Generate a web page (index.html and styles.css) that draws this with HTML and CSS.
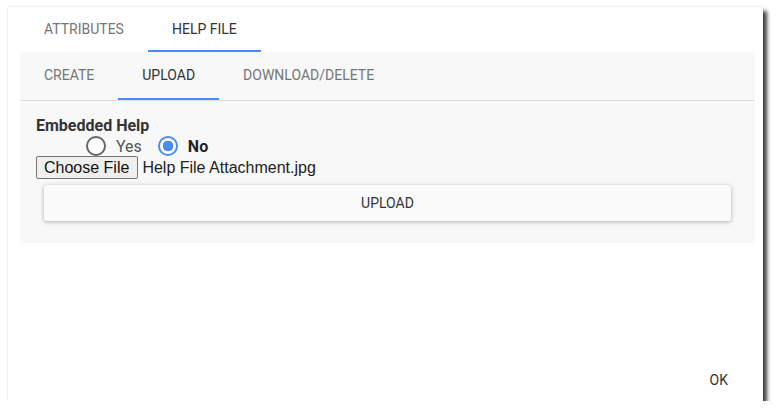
FILE: index.html
```html
<!DOCTYPE html>
<html lang="en">
<head>
    <meta charset="UTF-8">
    <meta name="viewport" content="width=device-width, initial-scale=1.0">
    <title>Help File</title>
    <link rel="stylesheet" href="styles.css">
</head>
<body>
    <div class="dialog">
        <div class="tabs">
            <div class="tab">Attributes</div>
            <div class="tab active">Help File</div>
        </div>

        <div class="panel">
            <div class="tabs sub-tabs">
                <div class="tab">Create</div>
                <div class="tab active">Upload</div>
                <div class="tab">Download/Delete</div>
            </div>

            <div class="upload-form">
                <div class="field-label">Embedded Help</div>
                <div class="radio-row">
                    <label class="radio"><span class="circle"></span>Yes</label>
                    <label class="radio checked"><span class="circle"></span>No</label>
                </div>
                <div class="file-row">
                    <span class="file-button">Choose File</span>
                    <span class="file-name">Help File Attachment.jpg</span>
                </div>
                <button class="upload-btn">Upload</button>
            </div>
        </div>

        <div class="actions">
            <button class="text-btn">OK</button>
        </div>
    </div>
</body>
</html>
```

FILE: styles.css
```css
body {
    margin: 0;
    font-family: Roboto, "Liberation Sans", Arial, sans-serif;
    background: #fff;
    color: #333;
}
.dialog {
    margin: 7px 0 0 8px;
    width: 755px;
    height: 394px;
    background: #fff;
    box-shadow: 4px 4px 4px rgba(0, 0, 0, 0.75), 0 0 2px rgba(0, 0, 0, 0.15);
    display: flex;
    flex-direction: column;
    padding: 0 12px;
    box-sizing: border-box;
}
.tabs {
    display: flex;
    height: 45px;
}
.tab {
    padding: 0 24px;
    display: flex;
    align-items: center;
    font-size: 14px;
    text-transform: uppercase;
    color: #757575;
    border-bottom: 2px solid transparent;
    padding-top: 1px;
    box-sizing: border-box;
}
.tab.active {
    color: #333;
    border-bottom-color: #4a8cf7;
}
.panel {
    background: #f8f8f8;
    margin-right: -4px;
    height: 191px;
}
.sub-tabs {
    height: 48px;
    border-bottom: 1px solid #ddd;
}
.sub-tabs .tab {
    padding-top: 0;
}
.upload-form {
    padding: 16px 24px 0 16px;
}
.field-label {
    font-weight: bold;
    font-size: 16px;
    line-height: 18px;
}
.radio-row {
    display: flex;
    padding-left: 50px;
    height: 20px;
    align-items: center;
    margin-top: 1px;
}
.radio {
    display: flex;
    align-items: center;
    font-size: 16px;
    color: #555;
    margin-right: 16px;
}
.radio .circle {
    width: 16px;
    height: 16px;
    border: 2px solid #666;
    border-radius: 50%;
    margin-right: 10px;
    box-sizing: content-box;
    background: #fff;
}
.radio.checked {
    font-weight: bold;
    color: #222;
}
.radio.checked .circle {
    border-color: #4a8cf7;
    background: radial-gradient(circle, #4a8cf7 0 5px, #fff 5.6px);
}
.file-row {
    display: flex;
    align-items: center;
    font-family: "Liberation Sans", Arial, sans-serif;
    font-size: 16px;
}
.file-button {
    background: #efefef;
    border: 1px solid #767676;
    border-radius: 2px;
    padding: 1px 8px 1px 7px;
    line-height: 19px;
    color: #111;
    margin-right: 4px;
}
.file-name {
    color: #222;
}
.upload-btn {
    display: block;
    width: 687px;
    height: 36px;
    margin: 6px 0 0 8px;
    background: #fafafa;
    border: none;
    border-radius: 3px;
    box-shadow: 0 1px 4px rgba(0, 0, 0, 0.3);
    font-family: Roboto, "Liberation Sans", Arial, sans-serif;
    font-size: 14px;
    text-transform: uppercase;
    color: #333;
}
.actions {
    margin-top: auto;
    display: flex;
    justify-content: flex-end;
    padding: 0 12px 7px 0;
}
.text-btn {
    background: none;
    border: none;
    font-family: Roboto, "Liberation Sans", Arial, sans-serif;
    font-size: 14px;
    color: #333;
    padding: 6px 11px;
}
```
